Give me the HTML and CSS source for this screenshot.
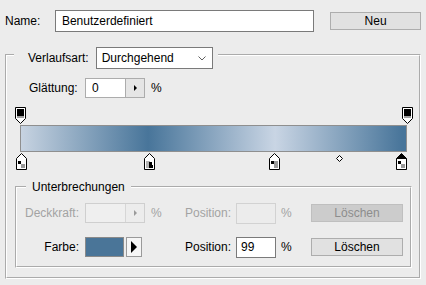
FILE: index.html
```html
<!DOCTYPE html>
<html lang="de">
<head>
    <meta charset="UTF-8">
    <title>Verläufe bearbeiten</title>
    <link rel="stylesheet" href="styles.css">
</head>
<body>
    <div class="dialog">
        <div class="name-row">
            <label class="name-label">Name:</label>
            <input class="name-input" type="text" value="Benutzerdefiniert">
            <button class="btn btn-new">Neu</button>
        </div>

        <fieldset class="group group-main">
            <legend class="type-legend">
                <span>Verlaufsart:</span>
                <span class="select">
                    <span>Durchgehend</span>
                    <svg width="8" height="5" viewBox="0 0 8 5"><path d="M0.5 0.5L4 4L7.5 0.5" fill="none" stroke="#606060"/></svg>
                </span>
            </legend>

            <div class="smooth-row">
                <span class="smooth-label">Glättung:</span>
                <div class="spinner">
                    <span class="spinner-value">0</span>
                    <span class="spinner-btn"><i class="tri"></i></span>
                </div>
                <span class="pct">%</span>
            </div>

            <!-- gradient ramp with opacity stops above and colour stops below -->
            <div class="ramp">
                <div class="stops stops-top">
                    <svg class="stop" style="left: 0%" width="11" height="17" viewBox="0 0 11 17">
                        <path d="M0.5 0.5H10.5V11.5L5.5 16.5L0.5 11.5Z" fill="#fff" stroke="#000"/>
                        <rect x="2" y="2" width="7" height="7" fill="#000"/>
                        <rect x="2" y="9" width="7" height="2" fill="#a0a0a0"/>
                    </svg>
                    <svg class="stop" style="left: 100%" width="11" height="17" viewBox="0 0 11 17">
                        <path d="M0.5 0.5H10.5V11.5L5.5 16.5L0.5 11.5Z" fill="#fff" stroke="#000"/>
                        <rect x="2" y="2" width="7" height="7" fill="#000"/>
                        <rect x="2" y="9" width="7" height="2" fill="#a0a0a0"/>
                    </svg>
                </div>
                <div class="ramp-bar"></div>
                <div class="stops stops-bottom">
                    <svg class="stop" style="left: 0.3%" width="11" height="17" viewBox="0 0 11 17">
                        <path d="M5.5 0.5L10.5 5.5V16.5H0.5V5.5Z" fill="#fff" stroke="#000"/>
                        <rect x="2" y="8" width="3" height="3" fill="#000"/>
                        <rect x="5" y="11" width="4" height="4" fill="#9a9a9a"/>
                    </svg>
                    <svg class="stop" style="left: 33.3%" width="11" height="17" viewBox="0 0 11 17">
                        <path d="M5.5 0.5L10.5 5.5V16.5H0.5V5.5Z" fill="#fff" stroke="#000"/>
                        <rect x="2" y="8" width="4" height="7" fill="#b4b4b4"/>
                        <rect x="5" y="9" width="3" height="3" fill="#000"/>
                        <rect x="5" y="12" width="4" height="3" fill="#000"/>
                    </svg>
                    <svg class="stop" style="left: 65.7%" width="11" height="17" viewBox="0 0 11 17">
                        <path d="M5.5 0.5L10.5 5.5V16.5H0.5V5.5Z" fill="#fff" stroke="#000"/>
                        <rect x="2" y="8" width="3" height="3" fill="#000"/>
                        <rect x="5" y="8" width="4" height="7" fill="#9a9a9a"/>
                    </svg>
                    <svg class="midpoint" style="left: 82.3%" width="7" height="7" viewBox="0 0 7 7">
                        <path d="M3.5 0.5L6.5 3.5L3.5 6.5L0.5 3.5Z" fill="#fff" stroke="#000"/>
                    </svg>
                    <svg class="stop" style="left: 98.5%" width="11" height="17" viewBox="0 0 11 17">
                        <path d="M5.5 0.5L10.5 5.5V16.5H0.5V5.5Z" fill="#000" stroke="#000"/>
                        <rect x="1" y="6" width="9" height="10" fill="#fff"/>
                        <rect x="2" y="8" width="3" height="3" fill="#000"/>
                        <rect x="5" y="11" width="4" height="4" fill="#9a9a9a"/>
                    </svg>
                </div>
            </div>

            <fieldset class="group group-stops">
                <legend class="stops-legend">Unterbrechungen</legend>
                <div class="stop-grid">
                    <span class="cell-label disabled">Deckkraft:</span>
                    <div class="spinner spinner-off">
                        <span class="spinner-value"></span>
                        <span class="spinner-btn"><i class="tri"></i></span>
                    </div>
                    <span class="disabled">%</span>
                    <span class="disabled">Position:</span>
                    <input class="pos-input" type="text" disabled>
                    <span class="pct-cell disabled">%</span>
                    <button class="btn" disabled>Löschen</button>

                    <span class="cell-label">Farbe:</span>
                    <div class="color-pick">
                        <span class="swatch"></span>
                        <span class="swatch-btn"><i class="tri-big"></i></span>
                    </div>
                    <span></span>
                    <span>Position:</span>
                    <input class="pos-input" type="text" value="99">
                    <span class="pct-cell">%</span>
                    <button class="btn">Löschen</button>
                </div>
            </fieldset>
        </fieldset>
    </div>
</body>
</html>
```

FILE: styles.css
```css
* {
    margin: 0;
    padding: 0;
    box-sizing: border-box;
}

body {
    background: #ececec;
    color: #000;
    font-family: 'Liberation Sans', Arial, sans-serif;
    font-size: 12px;
}

.dialog {
    width: 426px;
    height: 285px;
    padding: 10px 5px 0 5px;
}

/* top name row */
.name-row {
    display: flex;
    align-items: center;
    height: 22px;
}

.name-label {
    width: 50px;
}

.name-input {
    width: 260px;
    height: 22px;
    padding: 0 6px;
    border: 1px solid #7a7a7a;
    background: #fff;
    font: inherit;
    color: #000;
    outline: none;
}

.btn {
    width: 92px;
    height: 18px;
    border: 1px solid #adadad;
    background: #e1e1e1;
    font: inherit;
    color: #000;
}

.btn:disabled {
    background: #cccccc;
    border-color: #bfbfbf;
    color: #8d8d8d;
}

.btn-new {
    width: 91px;
    margin-left: 16px;
}

/* group boxes */
.group {
    border: 2px groove #fff;
    min-width: 0;
}

.group-main {
    margin-top: 9px;
}

.type-legend {
    display: flex;
    align-items: center;
    margin-left: 7px;
    padding: 6px 5px 0 14px;
}

.select {
    display: flex;
    align-items: center;
    justify-content: space-between;
    width: 117px;
    height: 22px;
    margin-left: 7px;
    padding: 0 6px 0 5px;
    border: 1px solid #7a7a7a;
    background: #fff;
}

.smooth-row {
    display: flex;
    align-items: center;
    margin: 9px 0 0 22px;
}

.smooth-label {
    width: 56px;
}

.pct {
    margin-left: 6px;
}

.spinner {
    display: flex;
    width: 60px;
    height: 20px;
    border: 1px solid #acacac;
    background: #fff;
}

.spinner-value {
    width: 39px;
    padding-left: 6px;
    line-height: 18px;
}

.spinner-btn {
    flex: 1;
    display: flex;
    align-items: center;
    justify-content: center;
    border-left: 1px solid #acacac;
    background: #e5e5e5;
}

.tri {
    width: 0;
    height: 0;
    border-left: 3px solid #000;
    border-top: 3px solid transparent;
    border-bottom: 3px solid transparent;
}

.spinner-off {
    border-color: #cfcfcf;
    background: #efefef;
}

.spinner-off .spinner-btn {
    border-left-color: #d6d6d6;
    background: #ececec;
}

.spinner-off .tri {
    border-left-color: #9a9a9a;
}

/* gradient ramp */
.ramp {
    width: 387px;
    margin: 9px 0 0 13px;
}

.stops {
    position: relative;
    height: 18px;
}

.stop {
    position: absolute;
    top: 0;
    margin-left: -5px;
}

.stops-bottom .stop {
    top: 1px;
}

.midpoint {
    position: absolute;
    top: 3px;
    margin-left: -3px;
}

.ramp-bar {
    height: 27px;
    border: 1px solid #8f8f8f;
    background: linear-gradient(to right, #c7d3e1 0%, #48759a 33%, #c9d5e4 66%, #48759a 99%);
}

/* colour stop settings */
.group-stops {
    width: 397px;
    margin: 10px 0 9px 8px;
}

.stops-legend {
    margin-left: 9px;
    padding: 0 6px;
    line-height: 14px;
}

.stop-grid {
    display: grid;
    grid-template-columns: 68px 66px 34px 51px 40px 35px 92px;
    grid-auto-rows: 22px;
    row-gap: 12px;
    align-items: center;
    margin: 8px 0 8px 0;
}

.cell-label {
    padding-right: 6px;
    text-align: right;
}

.disabled {
    color: #a3a3a3;
}

.pos-input {
    width: 40px;
    height: 21px;
    padding-left: 4px;
    border: 1px solid #7a7a7a;
    background: #fff;
    font: inherit;
    color: #000;
    outline: none;
}

.pos-input:disabled {
    border-color: #d2d2d2;
    background: #ececec;
}

.pct-cell {
    padding-left: 5px;
}

.color-pick {
    display: flex;
    gap: 2px;
}

.swatch {
    width: 39px;
    height: 20px;
    border: 1px solid #8a8a8a;
    background: #4a7598;
}

.swatch-btn {
    display: flex;
    align-items: center;
    justify-content: center;
    width: 16px;
    height: 20px;
    border: 1px solid #9a9a9a;
    background: #f6f6f6;
}

.tri-big {
    width: 0;
    height: 0;
    border-left: 6px solid #000;
    border-top: 6px solid transparent;
    border-bottom: 6px solid transparent;
}
```
